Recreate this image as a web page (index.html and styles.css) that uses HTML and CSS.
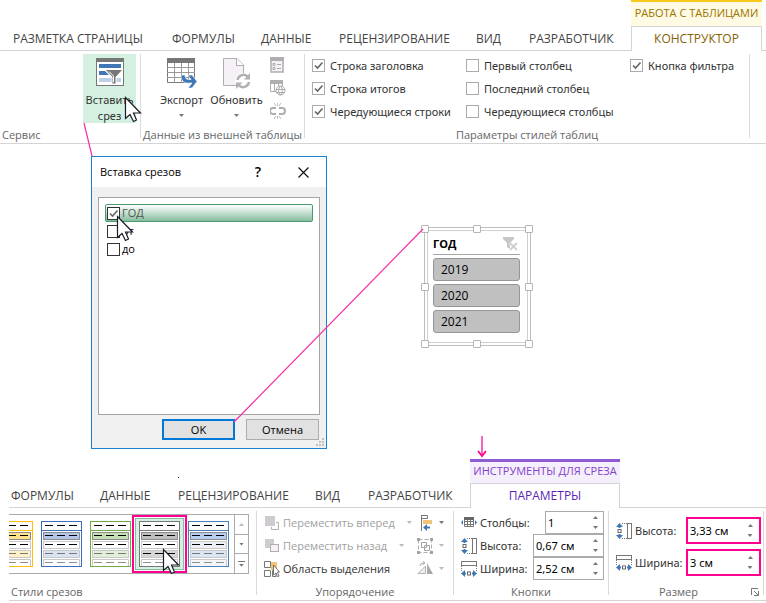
FILE: index.html
```html
<!DOCTYPE html>
<html lang="ru">
<head>
<meta charset="utf-8">
<title>Вставка срезов</title>
<link rel="stylesheet" href="styles.css">
</head>
<body>
<svg class="defs" aria-hidden="true">
  <defs>
    <symbol id="cursor" viewBox="0 0 18 27">
      <path d="M1.5 1.5V22.5L6 18.5L9.5 25.5L12.5 24L9.5 17H16.5Z" fill="#fff" stroke="#1c1c28" stroke-width="1.2"/>
    </symbol>
    <symbol id="height" viewBox="0 0 16 16">
      <path d="M0 4L3.500 0L7 4H4.500V5H2.500V4ZM0 12L3.500 16L7 12H4.500V11H2.500V12Z" fill="#3f78b4"/>
      <rect x="2" y="6.500" width="3" height="3" fill="#fff" stroke="#666"/>
      <path d="M6 .5H11M6 15.500H11" stroke="#777" stroke-dasharray="1 1"/>
      <rect x="11.500" y=".5" width="4" height="15" fill="#fff" stroke="#777"/>
    </symbol>
    <symbol id="width" viewBox="0 0 16 16">
      <path d="M4 9L0 12.500L4 16V13.500H5V11.500H4ZM12 9L16 12.500L12 16V13.500H11V11.500H12Z" fill="#3f78b4"/>
      <rect x="6.500" y="11" width="3" height="3" fill="#fff" stroke="#666"/>
      <path d="M.5 5V10M15.500 5V10" stroke="#777" stroke-dasharray="1 1"/>
      <rect x=".5" y=".5" width="15" height="4" fill="#fff" stroke="#777"/>
    </symbol>
    <symbol id="style" viewBox="0 0 41 46">
      <rect x=".5" y=".5" width="40" height="45" fill="#fff" stroke="currentColor"/>
      <path d="M0 9.500H41" stroke="currentColor"/>
      <rect x="2.500" y="11.500" width="36" height="7" fill="var(--a)" stroke="#8c8c8c"/>
      <rect x="2.500" y="20.500" width="36" height="7" fill="var(--b)" stroke="#c8c8c8"/>
      <rect x="2.500" y="29.500" width="36" height="7" fill="var(--c)" stroke="#c8c8c8"/>
      <path d="M2.500 45V38.500H38.500V45" fill="var(--d)" stroke="#c8c8c8"/>
      <path d="M4 4.500H37M4 14.500H37M4 23.500H37" stroke="#000" stroke-dasharray="8 4"/>
      <path d="M4 32.500H37" stroke="var(--e)" stroke-dasharray="8 4"/>
      <path d="M4 41.500H37" stroke="#909090" stroke-dasharray="8 4"/>
    </symbol>
  </defs>
</svg>
<main class="page">
  <section class="ribbon">
    <nav class="tabs tabs-top">
      <button class="tab">РАЗМЕТКА СТРАНИЦЫ</button>
      <button class="tab">ФОРМУЛЫ</button>
      <button class="tab">ДАННЫЕ</button>
      <button class="tab">РЕЦЕНЗИРОВАНИЕ</button>
      <button class="tab">ВИД</button>
      <button class="tab">РАЗРАБОТЧИК</button>
      <div class="context gold">
        <span class="context-title">РАБОТА С ТАБЛИЦАМИ</span>
        <button class="context-tab">КОНСТРУКТОР</button>
      </div>
    </nav>
    <div class="body">
      <div class="group service">
        <div class="content">
          <button class="big hot">
            <svg width="28" height="28" viewBox="0 0 28 28" preserveAspectRatio="xMidYMin"><rect x=".5" y=".5" width="27" height="27" fill="#fff" stroke="#777"/><path d="M0 0H28V4H0Z" fill="#777"/><path d="M3 6H25V10H3ZM3 13H9L13 17H3Z" fill="#3f78b4"/><path d="M3 20H25V24H3Z" fill="#bcd0e8"/><path d="M9 11.500H27L20 19V26H16V19Z" fill="#777" stroke="#fff"/><path d="M13 13.500L17.500 18V24" fill="none" stroke="#fff"/></svg>
            <span>Вставить<br>срез</span>
          </button>
        </div>
        <div class="label left">Сервис</div>
      </div>
      <div class="group external">
        <div class="content">
          <button class="big">
            <svg width="30" height="31" viewBox="0 0 30 31"><path d="M.5 1H27.500V24.500H.5Z" fill="#fff" stroke="#777"/><path d="M0 0H28V5H0Z" fill="#777"/><path d="M0 9.500H28M0 14.500H28M0 19.500H28M7.500 5V25M14.500 5V25M21.500 5V25" stroke="#999"/><path d="M14 17V18C14 23 18 26 23 25H25L21 30H25L30 23.500L25 17H21L24 21.500H22C19 21.500 18 20 18 17Z" fill="#3f78b4" stroke="#fff" stroke-width=".6"/></svg>
            <span>Экспорт</span><i class="caret"></i>
          </button>
          <button class="big">
            <svg width="28" height="31" viewBox="0 0 28 31"><path d="M.5 .5H14L20.500 7V27.500H.5Z" fill="#f5f1f6" stroke="#b0adb1"/><path d="M13.500 .5V7.500H20.500" fill="#fff" stroke="#b0adb1"/><circle cx="20" cy="23" r="8" fill="#fff"/><path d="M14.500 22A6 6 0 0 1 25 19M26 24A6 6 0 0 1 15.500 27" fill="none" stroke="#b3b0b4" stroke-width="2.500"/><path d="M27 15V21.500H21ZM13 31V24.500H19.500Z" fill="#b3b0b4"/></svg>
            <span>Обновить</span><i class="caret"></i>
          </button>
          <div class="minis">
            <svg width="15" height="16" viewBox="0 0 15 16"><path d="M1 1H13V15H1Z" fill="#f5f1f6" stroke="#b0adb1" stroke-width="1.500"/><path d="M0 0H14V4H0Z" fill="#b0adb1"/><path d="M7 7.500H11M7 11.500H11" stroke="#aaa"/><path d="M3 6.500H5V8.500H3ZM3 10.500H5V12.500H3Z" fill="#fff" stroke="#aaa"/></svg>
            <svg width="16" height="16" viewBox="0 0 16 16"><path d="M.5 1V11.500H6M4.500 1V11M8.500 1V8M12.500 1V6" fill="none" stroke="#b0adb1"/><path d="M0 0H13V4H0Z" fill="#b0adb1"/><circle cx="10.500" cy="10.500" r="4.500" fill="#fff" stroke="#aaa"/><path d="M6 9.500H15M6 12.500H15M10.500 6C8 8 8 13 10.500 15C13 13 13 8 10.500 6" fill="none" stroke="#aaa"/></svg>
            <svg width="16" height="16" viewBox="0 0 16 16"><path d="M6 5H3A2.500 2.500 0 0 0 3 11H6M9 5H12A2.500 2.500 0 0 1 12 11H9" fill="none" stroke="#b0adb1" stroke-width="2"/><path d="M4 0L6 3M7.500 0V3M11 0L9 3M4 16L6 13M7.500 16V13M11 16L9 13" stroke="#c0bdc1"/></svg>
          </div>
        </div>
        <div class="label">Данные из внешней таблицы</div>
      </div>
      <div class="group options">
        <div class="content checks">
          <label><input type="checkbox" checked>Строка заголовка</label>
          <label><input type="checkbox">Первый столбец</label>
          <label><input type="checkbox" checked>Кнопка фильтра</label>
          <label><input type="checkbox" checked>Строка итогов</label>
          <label><input type="checkbox">Последний столбец</label>
          <span></span>
          <label><input type="checkbox" checked>Чередующиеся строки</label>
          <label><input type="checkbox">Чередующиеся столбцы</label>
        </div>
        <div class="label">Параметры стилей таблиц</div>
      </div>
    </div>
  </section>

  <section class="stage">
    <div class="dialog" role="dialog" aria-labelledby="dialog-title">
      <header class="titlebar">
        <span id="dialog-title">Вставка срезов</span>
        <button class="help">?</button>
        <button class="close" aria-label="Закрыть"><svg width="11" height="11" viewBox="0 0 11 11"><path d="M.5 .5L10.500 10.500M10.500 .5L.5 10.500" stroke="#111" stroke-width="1.200"/></svg></button>
      </header>
      <div class="list">
        <label class="chosen"><input type="checkbox" checked>ГОД</label>
        <label><input type="checkbox">от</label>
        <label><input type="checkbox">до</label>
      </div>
      <footer class="actions">
        <button class="primary">OK</button>
        <button>Отмена</button>
      </footer>
      <svg class="grip" width="8" height="8" viewBox="0 0 8 8"><path d="M6 0H8V2H6ZM3 3H5V5H3ZM6 3H8V5H6ZM0 6H2V8H0ZM3 6H5V8H3ZM6 6H8V8H6Z" fill="#bfbfbf"/></svg>
    </div>
    <div class="slicer">
      <div class="slicer-inner">
        <header class="slicer-head">
          <span>ГОД</span>
          <svg width="18" height="14" viewBox="0 0 18 14"><path d="M1 0H12V2L8 6V12L5 10V6L1 2Z" fill="#c9c6ca"/><path d="M8 6L15 13M15 6L8 13" stroke="#fff" stroke-width="3"/><path d="M8 6L15 13M15 6L8 13" stroke="#d0cdd1" stroke-width="1.800"/></svg>
        </header>
        <button>2019</button>
        <button>2020</button>
        <button>2021</button>
      </div>
      <div class="handles"><i></i><i></i><i></i><i></i><b></b><i></i><i></i><i></i><i></i></div>
    </div>
  </section>

  <section class="ribbon lower">
    <nav class="tabs tabs-bottom">
      <button class="tab">ФОРМУЛЫ</button>
      <button class="tab">ДАННЫЕ</button>
      <button class="tab">РЕЦЕНЗИРОВАНИЕ</button>
      <button class="tab">ВИД</button>
      <button class="tab">РАЗРАБОТЧИК</button>
      <div class="context violet">
        <span class="context-title">ИНСТРУМЕНТЫ ДЛЯ СРЕЗА</span>
        <button class="context-tab">ПАРАМЕТРЫ</button>
      </div>
    </nav>
    <div class="body">
      <div class="group styles">
        <div class="content">
          <div class="gallery">
            <div class="thumbs">
              <button class="thumb yellow" aria-label="Желтый"><svg width="41" height="46"><use href="#style"/></svg></button>
              <button class="thumb blue" aria-label="Синий"><svg width="41" height="46"><use href="#style"/></svg></button>
              <button class="thumb green" aria-label="Зеленый"><svg width="41" height="46"><use href="#style"/></svg></button>
              <button class="thumb gray" aria-label="Серый"><svg width="41" height="46"><use href="#style"/></svg></button>
              <button class="thumb sky" aria-label="Голубой"><svg width="41" height="46"><use href="#style"/></svg></button>
            </div>
            <div class="scroller">
              <button aria-label="Вверх"><i class="caret up pale"></i></button>
              <button aria-label="Вниз"><i class="caret"></i></button>
              <button class="more" aria-label="Все стили"><i class="caret"></i></button>
            </div>
          </div>
        </div>
        <div class="label left">Стили срезов</div>
      </div>
      <div class="group arrange">
        <div class="content">
          <div class="rows">
            <button class="row off"><svg width="16" height="16" viewBox="0 0 16 16"><path d="M1 1H11V11H1Z" fill="#cfcbd0"/><path d="M12 7.500H14.500V14.500H7.500V12" fill="none" stroke="#b5b2b6"/></svg>Переместить вперед<i class="caret pale"></i></button>
            <button class="row off"><svg width="16" height="16" viewBox="0 0 16 16"><path d="M1 1H10V10H1Z" fill="#cfcbd0"/><rect x="6.500" y="6.500" width="8" height="7" fill="#f5f1f6" stroke="#b0adb1"/></svg>Переместить назад<i class="caret pale"></i></button>
            <button class="row"><svg width="16" height="16" viewBox="0 0 16 16"><path d="M.5 .5H6.500V6.500H.5ZM.5 9.500H6.500V15.500H.5ZM8.500 9.500H12V15.500H8.500Z" fill="#fff" stroke="#777"/><path d="M7 1H13V9H7Z" fill="#f0c377"/><path d="M9.500 4V14L12 12L13.500 16L15 15L13.500 11H15.500Z" fill="#fff" stroke="#555" stroke-width=".8"/></svg>Область выделения</button>
          </div>
          <div class="rows side">
            <button class="row" aria-label="Выровнять"><svg width="16" height="16" viewBox="0 0 16 16"><path d="M4.500 0V16" stroke="#777"/><path d="M5 .5H10.500V3.500H5" fill="none" stroke="#777"/><path d="M6 5H15V9H6Z" fill="#f0c377"/><path d="M6 12.500L10 9V11.500H13V13.500H10V16Z" fill="#3f78b4"/></svg><i class="caret"></i></button>
            <button class="row" aria-label="Группировать"><svg width="16" height="16" viewBox="0 0 16 16"><path d="M1.500 1.500H14.500V14.500H1.500Z" fill="none" stroke="#b0adb1" stroke-dasharray="4 2"/><path d="M4.500 4.500H9.500V9.500H4.500ZM7.500 7.500H12.500V12.500H7.500Z" fill="none" stroke="#a5a2a6"/><path d="M0 0H3V3H0ZM13 0H16V3H13ZM0 13H3V16H0ZM13 13H16V16H13Z" fill="#a5a2a6"/></svg><i class="caret pale"></i></button>
            <button class="row" aria-label="Повернуть"><svg width="16" height="16" viewBox="0 0 16 16"><path d="M1 12.500H8.500V5Z" fill="#eee" stroke="#b5b2b6"/><path d="M10 2V13H16Z" fill="#aaa"/><path d="M3 5Q3 2 7 2M5.500 0L8 2L5.500 4" fill="none" stroke="#aaa"/></svg><i class="caret pale"></i></button>
          </div>
        </div>
        <div class="label">Упорядочение</div>
      </div>
      <div class="group buttons">
        <div class="content fields">
          <div class="field short"><svg width="16" height="16" viewBox="0 0 16 16"><path d="M2 5L0 7.500L2 10ZM14 5L16 7.500L14 10Z" fill="#3f78b4"/><path d="M3.500 4V11.500H12.500V4M3 6.500H13M3 9.500H13M6.500 4V11M9.500 4V11" fill="none" stroke="#777"/><path d="M3 2H13V5H3Z" fill="#666"/></svg><label for="cols">Столбцы:</label><span class="spin"><input id="cols" value="1"><span class="arrows"><i class="caret up"></i><i class="caret"></i></span></span></div>
          <div class="field"><svg width="16" height="16"><use href="#height"/></svg><label for="bh">Высота:</label><span class="spin"><input id="bh" value="0,67 см"><span class="arrows"><i class="caret up"></i><i class="caret"></i></span></span></div>
          <div class="field"><svg width="16" height="16"><use href="#width"/></svg><label for="bw">Ширина:</label><span class="spin"><input id="bw" value="2,52 см"><span class="arrows"><i class="caret up"></i><i class="caret"></i></span></span></div>
        </div>
        <div class="label">Кнопки</div>
      </div>
      <div class="group size">
        <div class="content fields">
          <div class="field"><svg width="16" height="16"><use href="#height"/></svg><label for="sh">Высота:</label><span class="spin marked"><input id="sh" value="3,33 см"><span class="arrows"><i class="caret up"></i><i class="caret"></i></span></span></div>
          <div class="field"><svg width="16" height="16"><use href="#width"/></svg><label for="sw">Ширина:</label><span class="spin marked"><input id="sw" value="3 см"><span class="arrows"><i class="caret up"></i><i class="caret"></i></span></span></div>
        </div>
        <div class="label with-launcher"><span>Размер</span><svg width="8" height="8" viewBox="0 0 8 8"><path d="M.5 7V.5H7M3 3L7 7M7.500 3V7.500H3" fill="none" stroke="#777"/></svg></div>
      </div>
    </div>
  </section>

  <svg class="notes" width="766" height="603" viewBox="0 0 766 603" aria-hidden="true">
    <g fill="none" stroke="#f72fa3" stroke-width="1.200">
      <path d="M84 123L92 156"/>
      <path d="M234 422L423 229"/>
      <path d="M482 436V455" stroke-width="1.500"/>
      <path d="M478 451L482 456L486 451" stroke="#ff0090" stroke-width="1.800"/>
    </g>
    <rect x="178" y="477" width="1" height="1" fill="#333"/>
    <use href="#cursor" x="124" y="96" width="18" height="27"/>
    <use href="#cursor" x="116" y="215" width="18" height="27"/>
    <use href="#cursor" x="162" y="548" width="18" height="27"/>
  </svg>
</main>
</body>
</html>
```
FILE: styles.css
```css
* { box-sizing: border-box; }
body { margin: 0; background: #fff; color: #333; font: 12px/16px "Open Sans", "Noto Sans", sans-serif; }
button, input { font: inherit; color: inherit; margin: 0; }
button { padding: 0; border: 0; background: none; white-space: nowrap; }
svg { display: block; flex: none; }
.defs { position: absolute; width: 0; height: 0; }
.page { position: relative; min-width: 766px; overflow: hidden; }
.notes { position: absolute; left: 0; top: 0; pointer-events: none; }

/* ribbon tabs */
.tabs { display: grid; align-items: end; background: linear-gradient(#d4d4d4, #d4d4d4) bottom / 100% 1px no-repeat; }
.tabs-top { grid-template-columns: 159px 89px 78px 137px 53px 102px 131px; padding-left: 13px; }
.tabs-bottom { grid-template-columns: 89px 78px 137px 53px 102px 150px; padding-left: 2px; }
.tab { height: 24px; text-align: left; color: #444; }
.context { display: flex; flex-direction: column; }
.context-title { height: 26px; border-top: 2px solid; font-size: 11px; line-height: 22px; text-align: center; white-space: nowrap; }
.context-tab { height: 25px; border: 1px solid #d4d4d4; border-bottom: 0; background: #fff; }
.gold .context-title { background: #fffae3; border-color: #f6c91c; color: #9a7500; }
.gold .context-tab { color: #836300; }
.violet .context-title { height: 24px; border-top: 3px solid #8f5cd2; background: #f5effc; color: #8442cc; line-height: 18px; }
.violet .context-tab { color: #5c1fb5; }

/* ribbon body */
.body { display: flex; height: 93px; padding-top: 3px; border-bottom: 1px solid #d4d4d4; font-family: "Noto Sans", "Open Sans", sans-serif; }
.group { display: flex; flex-direction: column; padding-right: 1px; background: linear-gradient(#dadada, #dadada) right top / 1px calc(100% - 5px) no-repeat; }
.content { display: flex; flex: 1; font-size: 11px; }
.label { height: 16px; color: #666; font-family: "Open Sans", sans-serif; font-size: 11px; text-align: center; white-space: nowrap; }
.label.left { text-align: left; padding-left: 2px; }
.service { width: 141px; }
.service .content { justify-content: flex-end; padding-right: 4px; }
.external { width: 164px; }
.external .content { padding-left: 13px; }
.options { width: 445px; }
.big { display: flex; flex-direction: column; align-items: center; width: 55px; height: 69px; padding-top: 4px; }
.big svg { height: 31px; }
.big span { margin-top: 3px; }
.hot { width: 53px; background: #d3f0e0; }
.caret { flex: none; width: 5px; height: 3px; background: #777; clip-path: polygon(0 0, 100% 0, 50% 100%); }
.caret.up { transform: rotate(180deg); }
.caret.pale { background: #bbb; }
.big .caret { margin-top: 6px; }
.minis { display: flex; flex-direction: column; gap: 7px; padding: 3px 0 0 6px; }
.checks { display: grid; grid-template-columns: 154px 164px 1fr; grid-auto-rows: 23px; padding-left: 7px; }
.checks label { display: flex; align-items: center; gap: 5px; white-space: nowrap; }
input[type="checkbox"] { appearance: none; flex: none; width: 13px; height: 13px; border: 1px solid #ababab; background: #fff; }
input[type="checkbox"]:checked { background-image: url("data:image/svg+xml,%3Csvg xmlns='http://www.w3.org/2000/svg' viewBox='0 0 11 11'%3E%3Cpath d='M2 5.500L4.500 8L9.500 2.500' fill='none' stroke='%23666' stroke-width='1.600'/%3E%3C/svg%3E"); }

/* dialog and slicer */
.stage { display: flex; align-items: flex-start; gap: 94px; height: 315px; padding: 12px 0 0 91px; }
.dialog { position: relative; width: 236px; border: 1px solid #1b81d1; background: #f0f0f0; color: #000; font-size: 11px; }
.titlebar { display: flex; align-items: center; height: 30px; padding: 0 13px 0 8px; background: #fff; }
.help { margin-left: auto; width: 20px; font-size: 14px; font-weight: 600; }
.close { display: flex; justify-content: center; width: 20px; margin-left: 25px; }
.list { height: 218px; margin: 10px 6px 0; padding: 6px; border: 1px solid #a5a5a5; background: #fff; }
.list label { display: flex; align-items: center; gap: 2px; height: 18px; padding-left: 2px; }
.list input[type="checkbox"] { border-color: #333; }
.list .chosen { border: 1px solid #4a9b72; border-radius: 2px; padding-left: 1px; background: linear-gradient(#fff, #86bd9e); color: #555; }
.actions { display: flex; justify-content: flex-end; gap: 11px; padding: 4px 7px 8px; }
.actions button { width: 73px; height: 21px; border: 1px solid #adadad; background: #e1e1e1; line-height: 19px; }
.actions .primary { border: 2px solid #0078d7; line-height: 17px; }
.grip { position: absolute; right: 2px; bottom: 2px; }
.slicer { position: relative; width: 107px; margin-top: 71px; margin-left: 3px; padding: 2px; border: 1px solid #bebebe; background: #fff; }
.slicer-inner { display: flex; flex-direction: column; gap: 3px; padding: 3px 7px 9px 5px; border: 1px solid #cfcfcf; color: #000; }
.slicer-head { display: flex; justify-content: space-between; align-items: center; height: 21px; border-bottom: 1px solid #a6a6a6; font-size: 11px; font-weight: 700; }
.slicer button { height: 23px; padding-left: 7px; border: 1px solid #969696; border-radius: 3px; background: #c0c0c0; text-align: left; }
.handles { position: absolute; inset: -3px -3px -3px -4px; display: grid; grid-template-columns: repeat(3, 8px); grid-template-rows: repeat(3, 8px); justify-content: space-between; align-content: space-between; }
.handles i { border: 1px solid #b4b4b4; border-radius: 1px; background: #fff; }

/* lower ribbon */
.lower { margin-left: 9px; overflow: hidden; }
.styles { width: 248px; }
.gallery { display: flex; width: 240px; height: 60px; margin-top: 3px; border: solid #ababab; border-width: 1px 0; }
.thumbs { display: flex; flex: 1; min-width: 0; justify-content: flex-end; align-items: center; padding-right: 1px; }
.thumb { display: flex; flex: none; align-items: center; justify-content: center; width: 49px; height: 52px; }
.yellow { color: #fdbf0c; --a: #ffe08c; --b: #fff; --c: #fff0c8; --d: #fff; --e: #777; }
.blue { color: #3d6cbc; --a: #b4c6e8; --b: #fff; --c: #dae3f3; --d: #fff; --e: #777; }
.green { color: #6faa46; --a: #c5dfb3; --b: #fff; --c: #e2efd9; --d: #fff; --e: #777; }
.gray { color: #777; --a: #bfbfbf; --b: #fff; --c: #d6d6d6; --d: #fff; --e: #000; border: 1px solid #85bf9f; background: #d3f0e0; outline: 2px solid #ff0090; outline-offset: 1px; }
.sky { color: #4a7ebb; --a: #b4cdf0; --b: #eceff5; --c: #dae6f5; --d: #f4f6f9; --e: #777; }
.scroller { display: flex; flex: none; flex-direction: column; width: 15px; }
.scroller button { display: flex; flex: 1; align-items: center; justify-content: center; border: 1px solid #ababab; border-width: 0 1px 1px; }
.scroller button:last-child { border-bottom: 0; }
.scroller .more { flex-direction: column; gap: 2px; }
.more::before { content: ""; width: 7px; height: 1px; background: #777; }
.arrange { width: 197px; }
.arrange .content { justify-content: space-between; padding: 0 9px 0 7px; font-family: "Open Sans", sans-serif; }
.row { display: flex; align-items: center; gap: 3px; height: 23px; color: #333; }
.row .caret { margin-left: 9px; }
.side .row .caret { margin-left: 3px; }
.off { color: #a0a0a0; }
.buttons { width: 155px; }
.fields { flex-direction: column; padding: 0 4px 0 7px; }
.field { display: flex; align-items: center; gap: 3px; height: 23px; }
.field label { flex: 1; min-width: 0; white-space: nowrap; }
.spin { display: flex; flex: none; width: 71px; height: 23px; border: 1px solid #ababab; background: #fff; color: #000; }
.short .spin { width: 59px; }
.spin input { flex: 1; min-width: 0; padding: 0 0 0 2px; border: 0; background: none; outline: 0; }
.arrows { display: flex; flex-direction: column; align-items: center; justify-content: center; gap: 7px; width: 15px; }
.size { width: 155px; }
.size .fields { gap: 5px; padding: 6px 2px 0 7px; }
.size .field { height: 27px; }
.spin.marked { width: 75px; height: 27px; border: 2px solid #ff0090; }
.spin.marked .arrows { width: 18px; }
.with-launcher { display: flex; align-items: center; padding: 0 4px 0 50px; justify-content: space-between; }
```
